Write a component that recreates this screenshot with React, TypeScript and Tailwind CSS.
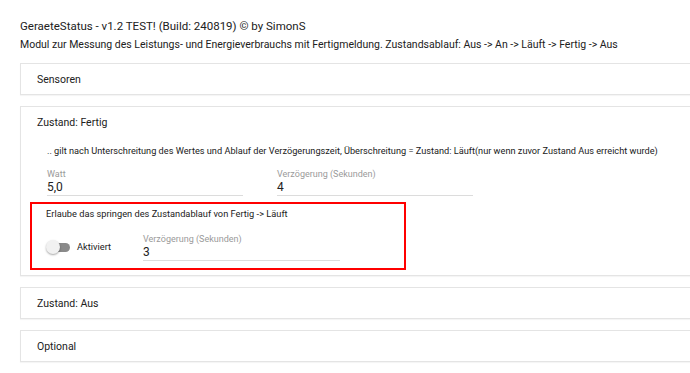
import React from 'react'

function Field({ label, value, width = 'w-[196px]' }: { label: string; value: string; width?: string }) {
  return (
    <div className={`${width} flex flex-col`}>
      <span className="text-[9px] leading-[12px] text-[#9a9a9a]">{label}</span>
      <span className="text-[12px] leading-[15px] border-b border-[#dcdcdc]">{value}</span>
    </div>
  )
}

function Panel({ title, children }: { title: string; children?: React.ReactNode }) {
  return (
    <div className="w-[700px] border border-[#e4e4e4] bg-white shadow-[0_1px_1px_rgba(0,0,0,0.04)]">
      <div className="h-[30px] flex items-center pl-4 pt-[1px] text-[10.5px]">{title}</div>
      {children}
    </div>
  )
}

function Toggle() {
  return (
    <div className="relative w-[24px] h-[14px] flex items-center">
      <div className="w-[22px] h-[9px] ml-[2px] rounded-full bg-[#8a8a8a]" />
      <div className="absolute left-0 top-0 w-[14px] h-[14px] rounded-full bg-[#f1f1f1] shadow-[0_1px_2px_rgba(0,0,0,0.35)]" />
    </div>
  )
}

export default function App() {
  return (
    <div className="w-[690px] h-[373px] overflow-hidden bg-white text-[#212121] font-['Roboto',sans-serif]">
      <div className="pl-5 pt-[17px]">
        <p className="text-[11.5px] leading-[18px]">GeraeteStatus - v1.2 TEST! (Build: 240819) © by SimonS</p>
        <p className="text-[10.5px] leading-[18px] mt-[1px]">
          Modul zur Messung des Leistungs- und Energieverbrauchs mit Fertigmeldung. Zustandsablauf: Aus -&gt; An -&gt; Läuft -&gt; Fertig -&gt; Aus
        </p>
        <div className="mt-[9px] flex flex-col gap-[11px]">
          <Panel title="Sensoren" />
          <Panel title="Zustand: Fertig">
            <div className="pl-[26px] pt-[7px] text-[9.2px] leading-[14px]">
              .. gilt nach Unterschreitung des Wertes und Ablauf der Verzögerungszeit, Überschreitung = Zustand: Läuft(nur wenn zuvor Zustand Aus erreicht wurde)
            </div>
            <div className="pl-[26px] pt-[10px] flex gap-[34px]">
              <Field label="Watt" value="5,0" />
              <Field label="Verzögerung (Sekunden)" value="4" />
            </div>
            <div className="ml-[9px] mt-[6px] mb-[5px] w-[376px] h-[68px] border-2 border-[#ff0000] pl-[14px] pt-[3px]">
              <p className="text-[9.25px] leading-[14px]">Erlaube das springen des Zustandablauf von Fertig -&gt; Läuft</p>
              <div className="flex items-center mt-[12px]">
                <div className="w-[97px] flex items-center">
                  <Toggle />
                  <span className="ml-[7px] text-[9.25px]">Aktiviert</span>
                </div>
                <Field label="Verzögerung (Sekunden)" value="3" width="w-[197px]" />
              </div>
            </div>
          </Panel>
          <Panel title="Zustand: Aus" />
          <Panel title="Optional" />
        </div>
      </div>
    </div>
  )
}
